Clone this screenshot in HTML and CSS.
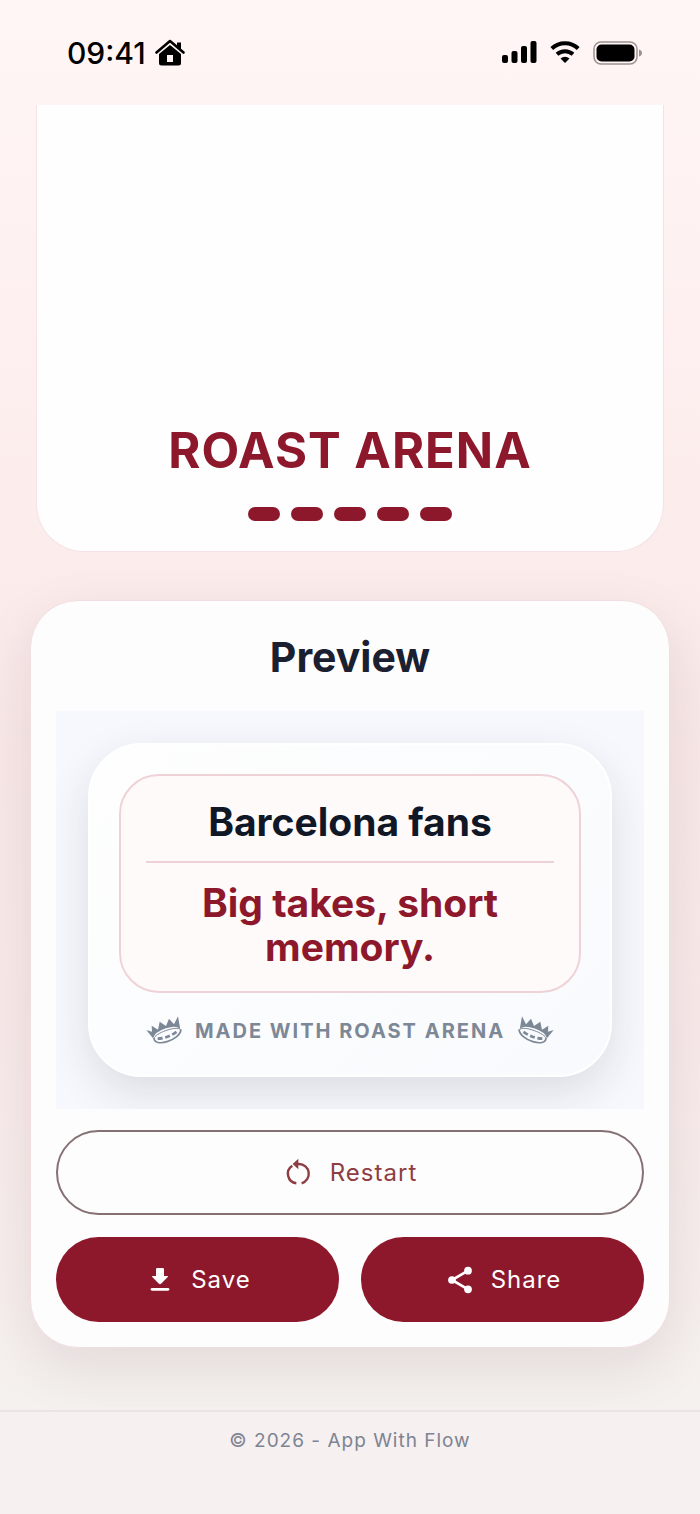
FILE: index.html
```html
<!DOCTYPE html>
<html lang="en">
<head>
  <meta charset="UTF-8">
  <meta name="viewport" content="width=device-width, initial-scale=1.0">
  <title>Roast Arena</title>
  <link rel="stylesheet" href="styles.css">
</head>
<body>
  <div class="status-bar">
    <div class="status-left">
      <span class="time">09:41</span>
      <svg width="30" height="27" viewBox="0 0 30 27" aria-hidden="true">
        <path d="M1.500 13.500 15 2l13.500 11.500" fill="none" stroke="#000" stroke-width="2.600" stroke-linecap="round" stroke-linejoin="round"/>
        <path d="M22 3.500h4v7l-4-3.500z"/>
        <path fill-rule="evenodd" d="M15 6 26 15v9q0 2.500-2.500 2.500h-17Q4 26.500 4 24v-9zM12 16v7h6v-7z"/>
      </svg>
    </div>
    <div class="status-right">
      <svg width="36" height="23" viewBox="0 0 36 23" aria-hidden="true">
        <rect x="1" y="14" width="6" height="8" rx="2"/>
        <rect x="10.500" y="10" width="6" height="12" rx="2"/>
        <rect x="20" y="5" width="6" height="17" rx="2"/>
        <rect x="29.500" y="0" width="6" height="22" rx="2"/>
      </svg>
      <svg width="30" height="23" viewBox="0 0 30 23" aria-hidden="true">
        <path d="M1.800 7.500a19 19 0 0 1 26.400 0M7 13.200a12 12 0 0 1 16 0" fill="none" stroke="#000" stroke-width="4"/>
        <path d="M15 22l-4.500-4.600a7 7 0 0 1 9 0z"/>
      </svg>
      <svg width="49" height="24" viewBox="0 0 49 24" aria-hidden="true">
        <rect x="1" y="1" width="43" height="22" rx="7" fill="none" stroke="#9b9293" stroke-width="1.500"/>
        <rect x="3.500" y="3.500" width="38" height="17" rx="5"/>
        <path d="M46 8.500q3 1 3 3.500t-3 3.500z" fill="#9b9293"/>
      </svg>
    </div>
  </div>

  <main>
    <section class="hero">
      <h1>ROAST ARENA</h1>
      <div class="dashes">
        <span></span>
        <span></span>
        <span></span>
        <span></span>
        <span></span>
      </div>
    </section>

    <section class="panel">
      <h2>Preview</h2>

      <div class="frame">
        <div class="card">
          <div class="roast">
            <h3>Barcelona fans</h3>
            <p>Big takes, short memory.</p>
          </div>
          <div class="credit">
            <svg class="crown" width="36" height="30" viewBox="0 0 108 90" aria-hidden="true">
              <path d="M1 42l17 5-1-18 19 12 5-24 19 13 9-22 15 17L96 1l7 40Q94 26 60 37T21 67z" fill="currentColor"/>
              <g fill="none" stroke="currentColor">
                <path d="M24 68C24 52 98 26 103 42" stroke-width="3"/>
                <path d="M35 68Q66 67 95 45" stroke-width="8" stroke-dasharray="15 8"/>
                <path d="M24 66C24 96 102 74 105 40" stroke-width="5"/>
              </g>
            </svg>
            <span>MADE WITH ROAST ARENA</span>
            <svg class="crown flipped" width="36" height="30" viewBox="0 0 108 90" aria-hidden="true">
              <path d="M1 42l17 5-1-18 19 12 5-24 19 13 9-22 15 17L96 1l7 40Q94 26 60 37T21 67z" fill="currentColor"/>
              <g fill="none" stroke="currentColor">
                <path d="M24 68C24 52 98 26 103 42" stroke-width="3"/>
                <path d="M35 68Q66 67 95 45" stroke-width="8" stroke-dasharray="15 8"/>
                <path d="M24 66C24 96 102 74 105 40" stroke-width="5"/>
              </g>
            </svg>
          </div>
        </div>
      </div>

      <div class="actions">
        <button type="button" class="btn btn-outline">
          <svg width="32" height="32" viewBox="0 0 24 24" aria-hidden="true">
            <path d="M7 6.500A7.200 7.200 0 0 0 10 19.700M14 19.700A7.400 7.400 0 0 0 12 5.200h-1.500" fill="none" stroke="currentColor" stroke-width="1.800"/>
            <path d="M11.500 1.300v7.800L7.200 5.200z" fill="currentColor"/>
          </svg>
          Restart
        </button>
        <button type="button" class="btn">
          <svg width="32" height="32" viewBox="0 0 24 24" aria-hidden="true">
            <path d="M10 3h4q1 0 1 1v5h2.500q1 0 .3.800l-5 5q-.8.700-1.600 0l-5-5q-.7-.8.300-.8H9V4q0-1 1-1z" fill="currentColor"/>
            <path d="M6 19h12" stroke="currentColor" stroke-width="2" stroke-linecap="round"/>
          </svg>
          Save
        </button>
        <button type="button" class="btn">
          <svg width="32" height="32" viewBox="0 0 24 24" aria-hidden="true">
            <path d="M18 5 6 12l12 7" fill="none" stroke="currentColor" stroke-width="2"/>
            <circle cx="18" cy="5" r="2.900" fill="currentColor"/>
            <circle cx="6" cy="12" r="2.900" fill="currentColor"/>
            <circle cx="18" cy="19" r="2.900" fill="currentColor"/>
          </svg>
          Share
        </button>
      </div>
    </section>
  </main>

  <footer>© 2026 - App With Flow</footer>
</body>
</html>
```

FILE: styles.css
```css
* {
  box-sizing: border-box;
}
body {
  margin: 0;
  min-height: 100vh;
  display: flex;
  flex-direction: column;
  font-family: Inter, "Liberation Sans", sans-serif;
  background: linear-gradient(180deg, #fff6f5 0%, #fdeeee 28%, #f9e8e8 50%, #f8eaea 70%, #f5f1ee 93%);
}
h1, h2, h3, p {
  margin: 0;
}
.status-bar {
  display: flex;
  justify-content: space-between;
  align-items: center;
  height: 105px;
  padding: 0 58px 0 67px;
}
.status-left {
  display: flex;
  align-items: center;
  gap: 9px;
}
.status-right {
  display: flex;
  align-items: center;
  gap: 13px;
}
.time {
  font-size: 30px;
  font-weight: 500;
}
main {
  flex: 1;
  padding: 0 30px;
}
.hero {
  margin: 0 6px 48px;
  padding: 316px 24px 30px;
  text-align: center;
  background: #fefefe;
  border: 1px solid #f4e2e5;
  border-top: 0;
  border-radius: 0 0 48px 48px;
}
.hero h1 {
  font-size: 49px;
  line-height: 60px;
  letter-spacing: 1px;
  color: #8e182b;
}
.dashes {
  display: flex;
  justify-content: center;
  gap: 11px;
  margin-top: 26px;
}
.dashes span {
  width: 32px;
  height: 14px;
  border-radius: 7px;
  background: #8e182b;
}
.panel {
  padding: 32px 25px 25px;
  background: #fdfdfd;
  border: 1px solid #f2dde1;
  border-radius: 48px;
  box-shadow: 0 20px 56px rgba(60, 30, 35, 0.1);
}
.panel h2 {
  font-size: 41px;
  line-height: 48px;
  text-align: center;
  color: #1a2030;
}
.frame {
  margin-top: 30px;
  padding: 32px;
  background: #f6f8fd;
  overflow: hidden;
}
.card {
  padding: 29px;
  background: linear-gradient(135deg, #fefefe, #f8fafd);
  border: 2px solid #fff;
  border-radius: 54px;
  box-shadow: 0 16px 44px rgba(30, 35, 35, 0.12);
}
.roast {
  padding: 22px 25px;
  text-align: center;
  background: #fffafa;
  border: 2px solid #efd2d7;
  border-radius: 40px;
}
.roast h3 {
  padding-bottom: 15px;
  border-bottom: 2px solid #efd2d7;
  font-size: 39px;
  line-height: 48px;
  color: #101827;
}
.roast p {
  padding: 18px 40px 0;
  font-size: 39px;
  font-weight: 700;
  line-height: 44px;
  color: #8e182b;
}
.credit {
  display: flex;
  justify-content: center;
  align-items: center;
  gap: 13px;
  margin-top: 23px;
  height: 30px;
  font-size: 20px;
  font-weight: 700;
  letter-spacing: 2px;
  white-space: nowrap;
  color: #7d8896;
}
.crown {
  flex-shrink: 0;
}
.flipped {
  transform: scaleX(-1);
}
.actions {
  display: grid;
  grid-template-columns: 1fr 1fr;
  gap: 22px;
  margin-top: 21px;
}
.btn {
  display: flex;
  justify-content: center;
  align-items: center;
  gap: 15px;
  height: 85px;
  padding: 0;
  font-family: inherit;
  font-size: 24px;
  letter-spacing: 1px;
  color: #fff;
  background: #8e182b;
  border: none;
  border-radius: 43px;
  cursor: pointer;
}
.btn-outline {
  grid-column: 1 / -1;
  color: #8e3d43;
  background: transparent;
  border: 2px solid #857073;
}
footer {
  margin-top: 62px;
  height: 105px;
  padding-top: 17px;
  border-top: 2px solid #ebe4e5;
  background: #f6f0f0;
  font-size: 19px;
  line-height: 24px;
  letter-spacing: 1px;
  text-align: center;
  color: #7d8493;
}
```
